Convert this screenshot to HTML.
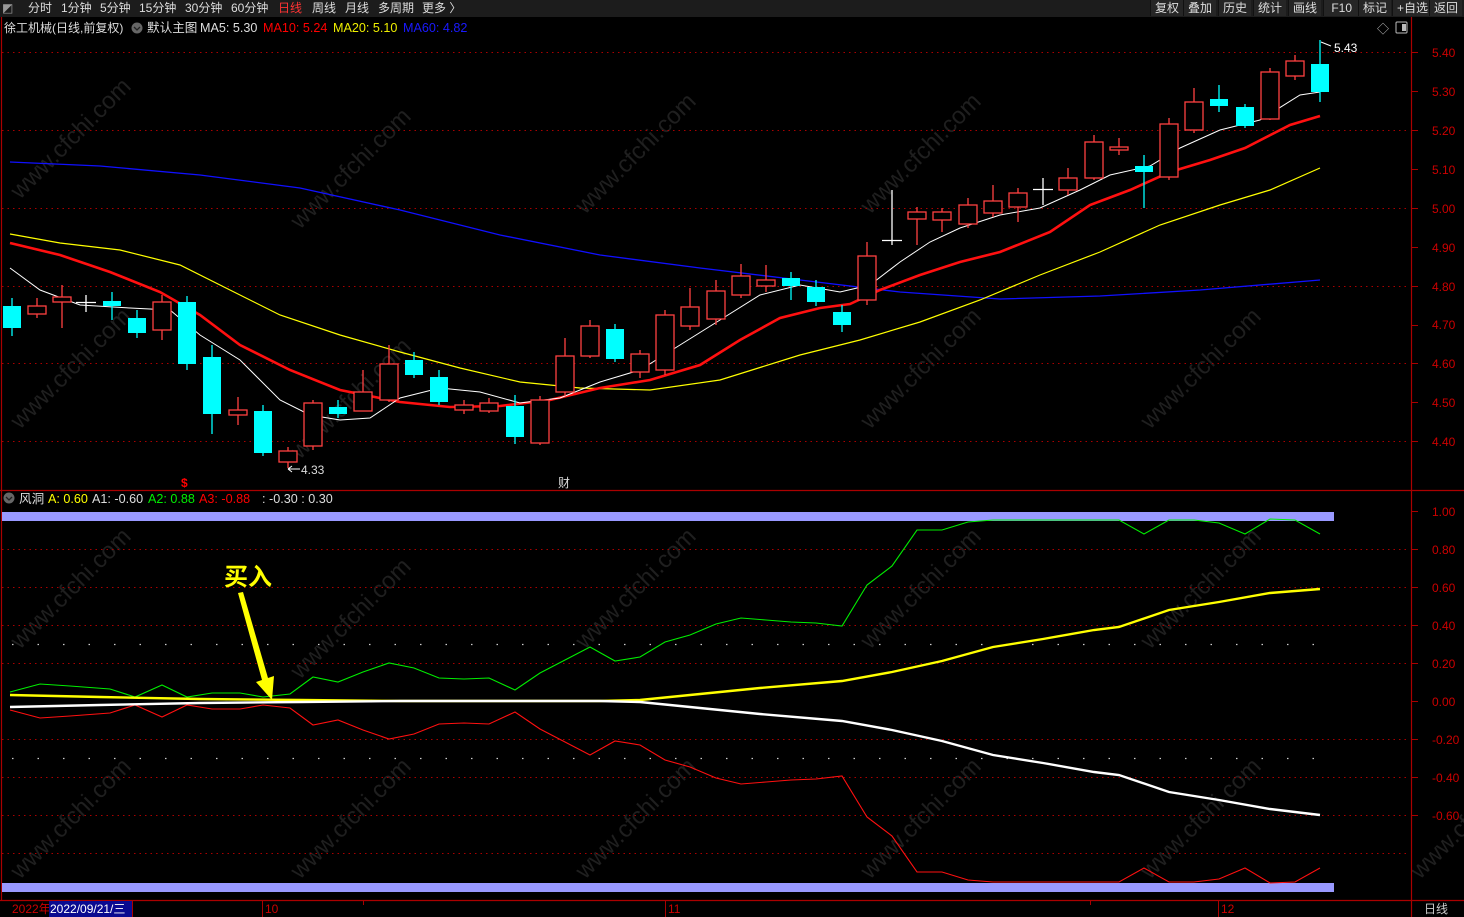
<!DOCTYPE html>
<html><head><meta charset="utf-8"><style>
body{margin:0;background:#000;width:1464px;height:917px;overflow:hidden;font-family:"Liberation Sans","Noto Sans CJK SC",sans-serif;}
#tb{position:absolute;left:0;top:0;width:1464px;height:17px;background:#1c1c1c;color:#ddd;font-size:12px;line-height:16px;}
#tb span{position:absolute;top:0}
#tbr span{background:#262626;padding:0 4px;border-left:1px solid #111}
svg{position:absolute;left:0;top:0}
</style></head><body>
<svg width="1464" height="917" xmlns="http://www.w3.org/2000/svg" font-family="Liberation Sans, Noto Sans CJK SC, sans-serif">
<g fill="#1f1f1f" font-size="24">
<text transform="translate(20,200) rotate(-45)">www.cfchi.com</text>
<text transform="translate(300,230) rotate(-45)">www.cfchi.com</text>
<text transform="translate(585,215) rotate(-45)">www.cfchi.com</text>
<text transform="translate(870,215) rotate(-45)">www.cfchi.com</text>
<text transform="translate(20,430) rotate(-45)">www.cfchi.com</text>
<text transform="translate(300,460) rotate(-45)">www.cfchi.com</text>
<text transform="translate(870,430) rotate(-45)">www.cfchi.com</text>
<text transform="translate(1150,430) rotate(-45)">www.cfchi.com</text>
<text transform="translate(20,650) rotate(-45)">www.cfchi.com</text>
<text transform="translate(300,680) rotate(-45)">www.cfchi.com</text>
<text transform="translate(585,650) rotate(-45)">www.cfchi.com</text>
<text transform="translate(870,650) rotate(-45)">www.cfchi.com</text>
<text transform="translate(1150,650) rotate(-45)">www.cfchi.com</text>
<text transform="translate(20,880) rotate(-45)">www.cfchi.com</text>
<text transform="translate(300,880) rotate(-45)">www.cfchi.com</text>
<text transform="translate(585,880) rotate(-45)">www.cfchi.com</text>
<text transform="translate(870,880) rotate(-45)">www.cfchi.com</text>
<text transform="translate(1150,880) rotate(-45)">www.cfchi.com</text>
<text transform="translate(1420,880) rotate(-45)">www.cfchi.com</text>
</g>
<g stroke="#a00" stroke-width="1.2" fill="none">
<line x1="0" y1="490.5" x2="1464" y2="490.5"/>
<line x1="1411.5" y1="17" x2="1411.5" y2="917"/>
<line x1="0" y1="900.5" x2="1464" y2="900.5"/>
<line x1="1.5" y1="17" x2="1.5" y2="900"/>
</g>
<g stroke="#a00" stroke-dasharray="1.5 4" stroke-width="1">
<line x1="2" y1="52.5" x2="1410" y2="52.5"/><line x1="2" y1="130.5" x2="1410" y2="130.5"/>
<line x1="2" y1="208.5" x2="1410" y2="208.5"/><line x1="2" y1="286.5" x2="1410" y2="286.5"/>
<line x1="2" y1="363.5" x2="1410" y2="363.5"/><line x1="2" y1="441.5" x2="1410" y2="441.5"/>
<line x1="2" y1="549.5" x2="1410" y2="549.5"/><line x1="2" y1="587.5" x2="1410" y2="587.5"/>
<line x1="2" y1="625.5" x2="1410" y2="625.5"/><line x1="2" y1="663.5" x2="1410" y2="663.5"/>
<line x1="2" y1="739.5" x2="1410" y2="739.5"/><line x1="2" y1="777.5" x2="1410" y2="777.5"/>
<line x1="2" y1="815.5" x2="1410" y2="815.5"/><line x1="2" y1="853.5" x2="1410" y2="853.5"/>
</g>
<g stroke="#ccc" stroke-dasharray="1.5 24" stroke-width="1.2">
<line x1="12" y1="644.5" x2="1330" y2="644.5"/><line x1="12" y1="758.5" x2="1330" y2="758.5"/>
</g>
<g fill="#c00" font-size="12">
<text x="1432" y="57">5.40</text><text x="1432" y="96">5.30</text><text x="1432" y="135">5.20</text><text x="1432" y="174">5.10</text><text x="1432" y="213">5.00</text><text x="1432" y="252">4.90</text><text x="1432" y="291">4.80</text><text x="1432" y="329">4.70</text><text x="1432" y="368">4.60</text><text x="1432" y="407">4.50</text><text x="1432" y="446">4.40</text>
<text x="1432" y="516">1.00</text><text x="1432" y="554">0.80</text><text x="1432" y="592">0.60</text><text x="1432" y="630">0.40</text><text x="1432" y="668">0.20</text><text x="1432" y="706">0.00</text><text x="1432" y="744">-0.20</text><text x="1432" y="782">-0.40</text><text x="1432" y="820">-0.60</text>
</g>
<g stroke="#a00" stroke-width="1">
<path d="M1412 52.5h6M1412 91.5h6M1412 130.5h6M1412 169.5h6M1412 208.5h6M1412 247.5h6M1412 286.5h6M1412 325.5h6M1412 363.5h6M1412 402.5h6M1412 441.5h6M1412 511.5h6M1412 549.5h6M1412 587.5h6M1412 625.5h6M1412 663.5h6M1412 701.5h6M1412 739.5h6M1412 777.5h6M1412 815.5h6"/>
</g>
<polyline fill="none" stroke="#1010ff" stroke-width="1.3" points="10,162 100,166 200,175 300,188 400,210 500,235 600,255 700,268 800,280 900,292 1000,299 1100,296 1200,290 1320,280"/>
<polyline fill="none" stroke="#ffff00" stroke-width="1.2" points="10,234 60,243 120,250 180,265 230,290 280,315 340,335 400,352 460,368 520,382 580,388 650,390 720,380 800,355 860,340 920,322 980,300 1040,275 1100,252 1160,225 1220,205 1270,190 1320,168"/>
<polyline fill="none" stroke="#ff1010" stroke-width="2.6" points="10,243 60,255 110,272 160,292 200,315 240,345 290,370 340,390 400,402 450,407 500,406 550,400 600,388 650,380 700,365 740,340 780,318 820,308 850,304 880,290 920,275 960,262 1000,252 1050,232 1090,205 1130,190 1170,172 1210,160 1245,148 1290,125 1320,116"/>
<polyline fill="none" stroke="#fff" stroke-width="1" points="10,268 40,290 80,305 130,308 170,310 200,335 240,360 280,400 310,415 340,420 370,418 400,398 440,388 480,392 520,403 560,398 600,382 640,370 680,345 720,320 760,295 800,285 840,292 870,285 900,262 930,242 960,228 1000,215 1040,208 1080,190 1110,175 1150,166 1180,148 1220,130 1260,120 1300,95 1320,92"/>
<g stroke-width="1.3">
<g stroke="#00ffff">
<path d="M12 298V336M112 292V320M137 310V338M187 296V370M212 345V434M263 405V456M338 400V418M414 352V378M439 370V405M515 395V444M615 324V362M791 272V300M816 280V306M842 305V332M1144 155V208M1219 85V112M1245 104V128M1320 40V102"/>
</g>
<g stroke="#ff4040">
<path d="M37 298V318M62 285V328M162 295V340M238 397V425M288 447V468M313 400V450M363 370V411M389 345V402M464 400V414M489 398V413M540 396V445M565 338V396M590 320V358M640 350V378M665 310V375M690 288V330M716 280V325M741 264V298M766 265V292M867 242V305M917 207V245M942 208V232M968 198V228M993 185V217M1018 188V222M1068 168V195M1094 135V180M1119 138V155M1169 118V180M1194 88V133M1270 68V120M1295 55V80"/>
</g>
<path stroke="#fff" d="M86 295V312M76 302.5h20M892 190V245M882 240.5h20M1043 178V205M1033 189.5h20"/>
</g>
<g fill="#00ffff">
<rect x="3" y="306" width="18" height="22"/><rect x="103" y="301" width="18" height="5"/><rect x="128" y="318" width="18" height="15"/><rect x="178" y="302" width="18" height="62"/><rect x="203" y="357" width="18" height="57"/><rect x="254" y="411" width="18" height="42"/><rect x="329" y="407" width="18" height="7"/><rect x="405" y="360" width="18" height="15"/><rect x="430" y="377" width="18" height="25"/><rect x="506" y="406" width="18" height="31"/><rect x="606" y="329" width="18" height="30"/><rect x="782" y="278" width="18" height="8"/><rect x="807" y="287" width="18" height="15"/><rect x="833" y="312" width="18" height="13"/><rect x="1135" y="166" width="18" height="6"/><rect x="1210" y="99" width="18" height="7"/><rect x="1236" y="107" width="18" height="19"/><rect x="1311" y="64" width="18" height="28"/>
</g>
<g fill="#000" stroke="#ff4040" stroke-width="1.3">
<rect x="28" y="306" width="18" height="8"/><rect x="53" y="297" width="18" height="5"/><rect x="153" y="302" width="18" height="28"/><rect x="229" y="410" width="18" height="5"/><rect x="279" y="451" width="18" height="11"/><rect x="304" y="403" width="18" height="43"/><rect x="354" y="392" width="18" height="19"/><rect x="380" y="364" width="18" height="36"/><rect x="455" y="405" width="18" height="5"/><rect x="480" y="403" width="18" height="8"/><rect x="531" y="400" width="18" height="43"/><rect x="556" y="356" width="18" height="36"/><rect x="581" y="326" width="18" height="30"/><rect x="631" y="354" width="18" height="18"/><rect x="656" y="315" width="18" height="55"/><rect x="681" y="307" width="18" height="19"/><rect x="707" y="291" width="18" height="28"/><rect x="732" y="276" width="18" height="19"/><rect x="757" y="280" width="18" height="6"/><rect x="858" y="256" width="18" height="44"/><rect x="908" y="212" width="18" height="7"/><rect x="933" y="212" width="18" height="8"/><rect x="959" y="205" width="18" height="19"/><rect x="984" y="201" width="18" height="12"/><rect x="1009" y="193" width="18" height="14"/><rect x="1059" y="178" width="18" height="12"/><rect x="1085" y="142" width="18" height="36"/><rect x="1110" y="147" width="18" height="3"/><rect x="1160" y="124" width="18" height="53"/><rect x="1185" y="102" width="18" height="28"/><rect x="1261" y="72" width="18" height="47"/><rect x="1286" y="61" width="18" height="15"/>
</g>
<path d="M1321 42l10 4" stroke="#fff" fill="none"/>
<text x="1334" y="52" fill="#fff" font-size="12">5.43</text>
<path d="M288 469h12M288 469l4-3M288 469l4 3" stroke="#fff" fill="none"/>
<text x="301" y="474" fill="#ddd" font-size="12">4.33</text>
<text x="181" y="487" fill="#f00" font-size="12" font-weight="bold">$</text>
<text x="558" y="487" fill="#ddd" font-size="12">财</text>
<text x="1377" y="33" fill="#bbb" font-size="12">◇</text>
<rect x="1396" y="22" width="11" height="11" fill="none" stroke="#bbb" rx="1"/><rect x="1402" y="24" width="4" height="7" fill="#bbb"/>
<rect x="2" y="512" width="1332" height="9" fill="#9999ff"/>
<rect x="2" y="883" width="1332" height="9" fill="#9999ff"/>
<polyline fill="none" stroke="#00ee00" stroke-width="1.1" points="10,692 40,684 70,686 110,689 135,697 162,685 187,697 212,693 240,693 263,697 290,694 313,677 338,682 363,672 389,663 414,668 439,678 464,679 489,678 515,690 540,673 565,660 590,647 615,661 640,657 665,642 690,635 716,624 741,618 766,620 791,622 816,623 842,626 867,585 892,566 917,530 942,530 968,522 993,520 1119,520 1144,534 1169,520 1194,520 1219,523 1245,534 1270,519 1295,520 1320,534"/>
<polyline fill="none" stroke="#ff1010" stroke-width="1.1" points="10,710 40,718 70,716 110,713 135,705 162,717 187,705 212,709 240,709 263,705 290,708 313,725 338,720 363,730 389,739 414,734 439,724 464,723 489,724 515,712 540,729 565,742 590,755 615,741 640,745 665,760 690,767 716,778 741,784 766,782 791,780 816,779 842,776 867,817 892,836 917,872 942,872 968,880 993,882 1119,882 1144,868 1169,882 1194,882 1219,879 1245,868 1270,883 1295,882 1320,868"/>
<polyline fill="none" stroke="#ffff00" stroke-width="2.4" points="10,695 100,697 200,699 300,700 400,701 600,701 640,700 700,694 760,688 842,681 892,672 942,661 993,647 1043,639 1094,630 1119,627 1169,610 1219,602 1270,593 1320,589"/>
<polyline fill="none" stroke="#fff" stroke-width="2.4" points="10,707 100,705 200,703 300,702 400,701 600,701 640,702 700,708 760,714 842,721 892,730 942,741 993,755 1043,763 1094,772 1119,775 1169,792 1219,800 1270,809 1320,815"/>
<text x="224" y="585" fill="#ffff00" font-size="24" font-weight="bold">买入</text>
<path d="M238 593L262 680L256 682L272 700L274 676L268 678L243 592Z" fill="#ffff00"/>
<circle cx="9" cy="498" r="5.5" fill="#666"/><path d="M6 497l3 3 3-3" stroke="#222" fill="none" stroke-width="1.3"/>
<text y="503" font-size="12.6"><tspan x="19" fill="#ddd">风洞</tspan><tspan x="48" fill="#ffff00">A: 0.60</tspan><tspan x="92" fill="#ddd">A1: -0.60</tspan><tspan x="148" fill="#00ee00">A2: 0.88</tspan><tspan x="199" fill="#f00">A3: -0.88</tspan><tspan x="262" fill="#ddd">: -0.30 : 0.30</tspan></text>
<circle cx="137" cy="28" r="5.5" fill="#666"/><path d="M134 27l3 3 3-3" stroke="#222" fill="none" stroke-width="1.3"/>
<text y="32" font-size="12.6"><tspan x="4" fill="#ddd" font-size="12">徐工机械(日线,前复权)</tspan><tspan fill="#ddd" x="147">默认主图</tspan><tspan x="200" fill="#ddd">MA5: 5.30</tspan><tspan x="263" fill="#f00">MA10: 5.24</tspan><tspan x="333" fill="#ee0">MA20: 5.10</tspan><tspan x="403" fill="#1a1aff">MA60: 4.82</tspan></text>
<text x="12" y="913" fill="#c00" font-size="12">2022年</text>
<rect x="49" y="901" width="84" height="16" fill="#0a0a90"/>
<text x="50" y="913" fill="#fff" font-size="12">2022/09/21/三</text>
<g stroke="#a00"><path d="M132.5 901v16M262.5 901v16M665.5 901v16M1218.5 901v16M363.5 901v4M1090.5 901v4"/></g>
<text x="265" y="913" fill="#c00" font-size="12">10</text>
<text x="668" y="913" fill="#c00" font-size="12">11</text>
<text x="1221" y="913" fill="#c00" font-size="12">12</text>
<text x="1424" y="913" fill="#ccc" font-size="12">日线</text>
</svg>
<div id="tb">
<span style="left:2px;color:#999">◩</span>
<span style="left:28px">分时</span><span style="left:61px">1分钟</span><span style="left:100px">5分钟</span><span style="left:139px">15分钟</span><span style="left:185px">30分钟</span><span style="left:231px">60分钟</span><span style="left:278px;color:#f33">日线</span><span style="left:312px">周线</span><span style="left:345px">月线</span><span style="left:378px">多周期</span><span style="left:422px">更多 〉</span>
<div id="tbr"><span style="left:1150px">复权</span><span style="left:1183px">叠加</span><span style="left:1218px">历史</span><span style="left:1253px">统计</span><span style="left:1288px">画线</span><span style="left:1323px">&nbsp;F10&nbsp;</span><span style="left:1358px">标记</span><span style="left:1392px">+自选</span><span style="left:1429px">返回</span></div>
</div>
</body></html>
